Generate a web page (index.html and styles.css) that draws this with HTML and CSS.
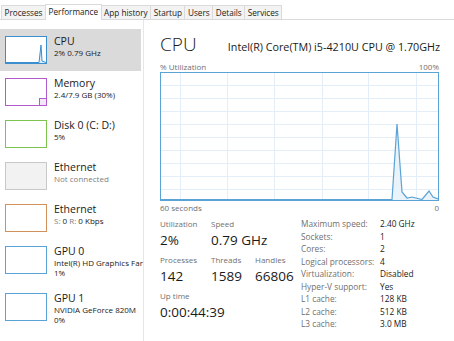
FILE: index.html
```html
<!DOCTYPE html>
<html>
<head>
<meta charset="utf-8">
<link rel="stylesheet" href="styles.css">
</head>
<body>
<div class="tabs">
  <div class="tab">Processes</div>
  <div class="tab active">Performance</div>
  <div class="tab">App history</div>
  <div class="tab">Startup</div>
  <div class="tab">Users</div>
  <div class="tab">Details</div>
  <div class="tab">Services</div>
</div>
<div class="main">
  <div class="sidebar">
    <div class="item selected">
      <div class="thumb cpu">
        <svg width="40" height="26" viewBox="0 0 40 26"><polygon points="33,26 35,8 36,24 40,26" fill="#dcecf8"/><polyline points="0,25.5 33,25.5 35,8 36,24 40,25.5" fill="none" stroke="#3b8fcf" stroke-width="1"/></svg>
      </div>
      <div class="info"><div class="name">CPU</div><div class="sub">2% 0.79 GHz</div></div>
    </div>
    <div class="item">
      <div class="thumb mem">
        <svg width="40" height="26" viewBox="0 0 40 26"><rect x="33.5" y="19.5" width="7" height="7" fill="#f3e6f7" stroke="#b25bcf" stroke-width="1"/></svg>
      </div>
      <div class="info"><div class="name">Memory</div><div class="sub">2.4/7.9 GB (30%)</div></div>
    </div>
    <div class="item">
      <div class="thumb disk"></div>
      <div class="info"><div class="name">Disk 0 (C: D:)</div><div class="sub">5%</div></div>
    </div>
    <div class="item">
      <div class="thumb off"></div>
      <div class="info"><div class="name">Ethernet</div><div class="sub muted">Not connected</div></div>
    </div>
    <div class="item">
      <div class="thumb eth"></div>
      <div class="info"><div class="name">Ethernet</div><div class="sub"><span class="muted">S:</span> 0 <span class="muted">R:</span> 0 Kbps</div></div>
    </div>
    <div class="item">
      <div class="thumb gpu"></div>
      <div class="info"><div class="name">GPU 0</div><div class="sub clip">Intel(R) HD Graphics Far</div><div class="sub">1%</div></div>
    </div>
    <div class="item">
      <div class="thumb gpu"></div>
      <div class="info"><div class="name">GPU 1</div><div class="sub">NVIDIA GeForce 820M</div><div class="sub">0%</div></div>
    </div>
  </div>
  <div class="panel">
    <div class="head">
      <div class="title">CPU</div>
      <div class="model">Intel(R) Core(TM) i5-4210U CPU @ 1.70GHz</div>
    </div>
    <div class="axis"><span>% Utilization</span><span>100%</span></div>
    <div class="graph">
      <svg width="277" height="127" viewBox="0 0 277 127">
        <g stroke="#e3eef8" stroke-width="1">
          <line x1="19.5" y1="0" x2="19.5" y2="127"/>
          <line x1="66.5" y1="0" x2="66.5" y2="127"/>
          <line x1="113.5" y1="0" x2="113.5" y2="127"/>
          <line x1="161.5" y1="0" x2="161.5" y2="127"/>
          <line x1="207.5" y1="0" x2="207.5" y2="127"/>
          <line x1="255.5" y1="0" x2="255.5" y2="127"/>
          <line x1="0" y1="12.5" x2="277" y2="12.5"/>
          <line x1="0" y1="25.5" x2="277" y2="25.5"/>
          <line x1="0" y1="38.5" x2="277" y2="38.5"/>
          <line x1="0" y1="51.5" x2="277" y2="51.5"/>
          <line x1="0" y1="64.5" x2="277" y2="64.5"/>
          <line x1="0" y1="77.5" x2="277" y2="77.5"/>
          <line x1="0" y1="90.5" x2="277" y2="90.5"/>
          <line x1="0" y1="103.5" x2="277" y2="103.5"/>
          <line x1="0" y1="116.5" x2="277" y2="116.5"/>
        </g>
        <polygon points="231,127 236,51 241,119 246,125 251,124 261,127 268,118 272,124 277,126 277,127" fill="#eaf3fa"/>
        <polyline points="0,126.5 231,126.5 236,51 241,119 246,125 251,124 261,126.5 268,118 272,124 277,126" fill="none" stroke="#5aa3d6" stroke-width="1.2"/>
      </svg>
    </div>
    <div class="axis below"><span>60 seconds</span><span>0</span></div>
    <div class="stats">
      <div class="dyn">
        <div class="stat"><div class="lbl">Utilization</div><div class="val">2%</div></div>
        <div class="stat span2"><div class="lbl">Speed</div><div class="val">0.79 GHz</div></div>
        <div class="stat"><div class="lbl">Processes</div><div class="val">142</div></div>
        <div class="stat"><div class="lbl">Threads</div><div class="val">1589</div></div>
        <div class="stat"><div class="lbl">Handles</div><div class="val">66806</div></div>
        <div class="stat span3"><div class="lbl">Up time</div><div class="val">0:00:44:39</div></div>
      </div>
      <div class="specs">
        <div class="k">Maximum speed:</div><div class="v">2.40 GHz</div>
        <div class="k">Sockets:</div><div class="v">1</div>
        <div class="k">Cores:</div><div class="v">2</div>
        <div class="k">Logical processors:</div><div class="v">4</div>
        <div class="k">Virtualization:</div><div class="v">Disabled</div>
        <div class="k">Hyper-V support:</div><div class="v">Yes</div>
        <div class="k">L1 cache:</div><div class="v">128 KB</div>
        <div class="k">L2 cache:</div><div class="v">512 KB</div>
        <div class="k">L3 cache:</div><div class="v">3.0 MB</div>
      </div>
    </div>
  </div>
</div>
</body>
</html>
```
FILE: styles.css
```css
* { box-sizing: border-box; }
html, body { margin: 0; padding: 0; }
body {
  width: 454px;
  height: 341px;
  overflow: hidden;
  background: #fff;
  color: #1a1a1a;
  font-family: "Open Sans", "Liberation Sans", sans-serif;
}
.tabs {
  display: flex;
  align-items: flex-end;
  height: 20px;
  padding-left: 1px;
  border-bottom: 1px solid #d9d9d9;
}
.tab {
  height: 14px;
  padding: 0 2.5px;
  font-size: 8.2px;
  line-height: 13px;
  background: #f3f3f3;
  border: 1px solid #dadada;
  border-bottom: none;
  margin-right: -1px;
  color: #1a1a1a;
}
.tab.active {
  height: 16px;
  margin-bottom: -1px;
  line-height: 14px;
  background: #fff;
  position: relative;
  z-index: 1;
}
.main {
  display: flex;
  height: 321px;
}
.sidebar {
  width: 144px;
  padding-top: 8.5px;
  border-right: 1px solid #e6e6e6;
  margin-right: 1px;
}
.item {
  display: flex;
  align-items: flex-start;
  gap: 7px;
  padding: 7px 0 7px 5px;
  width: 141px;
  min-height: 41.5px;
}
.item.selected { background: #dadada; }
.thumb {
  width: 42px;
  height: 28px;
  flex: none;
  border: 1px solid #3b8fcf;
  background: #fff;
}
.thumb svg { display: block; }
.thumb.cpu { border-color: #3b8fcf; }
.thumb.mem { border-color: #b25bcf; }
.thumb.disk { border-color: #7cc44f; }
.thumb.off { border-color: #c8c8c8; background: #f2f2f2; }
.thumb.eth { border-color: #d0915a; }
.thumb.gpu { border-color: #5aa3d6; }
.info { margin-top: -2px; min-width: 0; }
.name { font-size: 10.5px; line-height: 14px; white-space: nowrap; }
.sub { font-size: 8px; line-height: 10.5px; white-space: nowrap; }
.muted { color: #808080; }
.panel {
  flex: 1;
  padding: 10px 0 0 15px;
}
.head {
  width: 280px;
  display: flex;
  align-items: baseline;
  justify-content: space-between;
}
.title { font-size: 19px; font-weight: 300; line-height: 28px; }
.model { font-size: 10.75px; line-height: 16px; }
.axis {
  width: 279px;
  display: flex;
  justify-content: space-between;
  font-size: 8px;
  line-height: 10px;
  color: #707070;
  margin-top: 4px;
}
.axis.below { margin-top: 2px; }
.graph {
  width: 279px;
  height: 129px;
  border: 1px solid #5aa3d6;
}
.graph svg { display: block; }
.stats {
  display: flex;
  margin-top: 5px;
}
.dyn {
  display: grid;
  grid-template-columns: 51px 44px auto;
  row-gap: 5px;
  width: 141px;
  align-content: start;
}
.span2 { grid-column: span 2; }
.span3 { grid-column: span 3; }
.lbl { font-size: 8px; line-height: 12px; color: #707070; }
.val { font-size: 13.5px; line-height: 18px; margin-top: 1px; }
.specs {
  display: grid;
  grid-template-columns: 79px auto;
  font-size: 8.3px;
  line-height: 12.5px;
}
.specs .k { color: #707070; }
```
